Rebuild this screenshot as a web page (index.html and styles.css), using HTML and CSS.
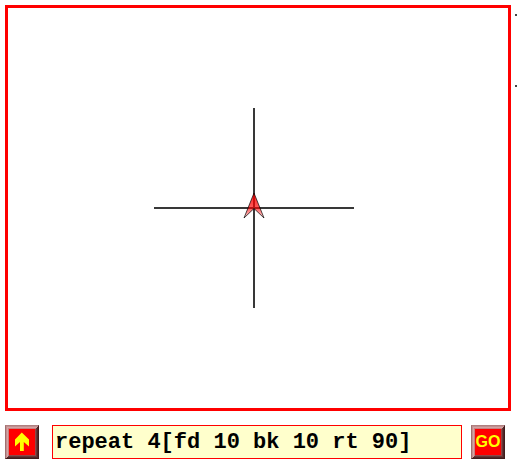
FILE: index.html
```
<!DOCTYPE html>
<html lang="en">
<head>
<meta charset="utf-8">
<title>Turtle</title>
<link rel="stylesheet" href="styles.css">
</head>
<body>
<main class="app">
  <div class="stage">
    <div class="board">
      <svg class="drawing" width="500" height="400" viewBox="0 0 500 400">
        <path class="trail" d="M246 100V300M146 200H346"/>
        <defs><linearGradient id="turtle-fill" x1="0" y1="0" x2="0" y2="1"><stop offset="0.2" stop-color="#ff0000" stop-opacity="0.8"/><stop offset="0.6" stop-color="#ff0000" stop-opacity="0.65"/><stop offset="1" stop-color="#ff0000" stop-opacity="0.15"/></linearGradient></defs>
        <path class="turtle" d="M246 185L256 210L246 200.500L236 210Z"/>
      </svg>
    </div>
    <div class="marks"><i></i><i></i></div>
  </div>
  <div class="controls">
    <button class="btn" aria-label="Previous"><svg width="26" height="26" viewBox="0 0 26 26"><path d="M12.800 3.500L20 10.500V17.500L14.800 13V22H11V13L6 17.500V10.500Z" fill="#ffff00"/></svg></button>
    <input class="command" type="text" value="repeat 4[fd 10 bk 10 rt 90]" spellcheck="false">
    <button class="btn go">GO</button>
  </div>
</main>
</body>
</html>
```
FILE: styles.css
```
* { box-sizing: border-box; }
body { margin: 0; background: #fff; overflow: hidden; }
.app { width: 517px; height: 469px; padding: 5px 0 0 5px; }
.stage { display: flex; }
.board { width: 506px; height: 406px; border: 3px solid #f00; flex: none; }
.drawing { display: block; }
.trail { stroke: #000; stroke-opacity: 0.78; stroke-width: 2; fill: none; }
.turtle { fill: url(#turtle-fill); stroke: #000; stroke-opacity: 0.7; stroke-width: 1; }
.marks { display: flex; flex-direction: column; gap: 69px; padding: 9px 0 0 4px; }
.marks i { display: block; width: 2px; height: 2px; background: #444; }
.controls { display: flex; margin-top: 14px; }
.btn {
  width: 34px; height: 34px; padding: 3px; flex: none;
  display: flex; align-items: center; justify-content: center;
  border: 1px solid; border-color: #b08080 #401c1c #401c1c #a07070;
  background: #f00; color: #ff0;
  box-shadow:
    inset 1px 1px #c09090, inset -1px -1px #502828,
    inset 2px 2px #d4a4a4, inset -2px -2px #683838,
    inset 3px 3px #c88080, inset -3px -3px #904848;
  font: bold 16px/26px "Liberation Sans", Arial, sans-serif;
}
.btn svg { flex: none; }
.command {
  width: 410px; height: 34px; margin: 0 9px 0 13px; padding: 0 2px;
  border: 1px solid #f00; border-radius: 0; outline: none;
  background: #ffffcc; color: #000;
  font: bold 22px/32px "Liberation Mono", "Courier New", monospace;
}
```
